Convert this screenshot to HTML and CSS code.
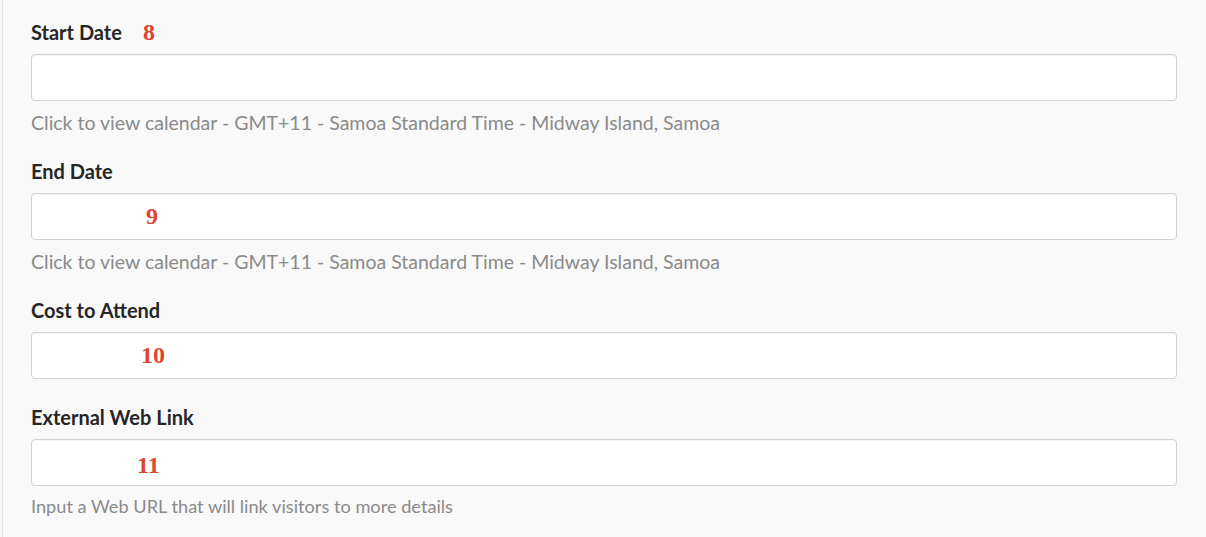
FILE: index.html
```html
<!DOCTYPE html>
<html>
<head>
<meta charset="utf-8">
<link rel="stylesheet" href="styles.css">
</head>
<body>
<div class="panel">
  <div class="field">
    <label class="label">Start Date</label>
    <span class="mark mark-8">8</span>
    <div class="input"></div>
    <p class="help">Click to view calendar - GMT+11 - Samoa Standard Time - Midway Island, Samoa</p>
  </div>
  <div class="field">
    <label class="label">End Date</label>
    <div class="input"><span class="mark mark-9">9</span></div>
    <p class="help">Click to view calendar - GMT+11 - Samoa Standard Time - Midway Island, Samoa</p>
  </div>
  <div class="field">
    <label class="label">Cost to Attend</label>
    <div class="input"><span class="mark mark-10">10</span></div>
  </div>
  <div class="field">
    <label class="label">External Web Link</label>
    <div class="input"><span class="mark mark-11">11</span></div>
    <p class="help help-small">Input a Web URL that will link visitors to more details</p>
  </div>
</div>
</body>
</html>
```
FILE: styles.css
```css
html, body {
  margin: 0;
  padding: 0;
  background: #f9f9f9;
}
body {
  font-family: Lato, "Open Sans", sans-serif;
  height: 537px;
  overflow: hidden;
}
.panel {
  margin-left: 2px;
  border-left: 1px solid #e6e6e6;
  padding: 22px 29px 0 28px;
  height: 537px;
  box-sizing: border-box;
  display: flex;
  flex-direction: column;
  gap: 28px;
}
.field {
  position: relative;
  display: flex;
  flex-direction: column;
}
.label {
  display: block;
  font-weight: 700;
  font-size: 20px;
  line-height: 20px;
  color: #262626;
  margin: 0 0 12px 0;
}
.input {
  position: relative;
  height: 47px;
  box-sizing: border-box;
  background: #fff;
  border: 1px solid #d2d2d2;
  border-radius: 4px;
  box-shadow: inset 0 1px 1px rgba(0,0,0,0.04);
}
.help {
  margin: 12px 0 0 0;
  font-size: 19.5px;
  line-height: 20px;
  color: #8a8a8a;
}
.help-small {
  font-size: 18.2px;
  margin-top: 10px;
}
.mark {
  position: absolute;
  font-family: "Liberation Serif", "Times New Roman", serif;
  font-weight: 700;
  font-size: 24px;
  line-height: 26px;
  color: #e0452f;
}
.mark-8 { left: 112px; top: -3px; }
.mark-9 { left: 114px; top: 9px; }
.mark-10 { left: 109px; top: 9px; }
.mark-11 { left: 105px; top: 12px; }
```
